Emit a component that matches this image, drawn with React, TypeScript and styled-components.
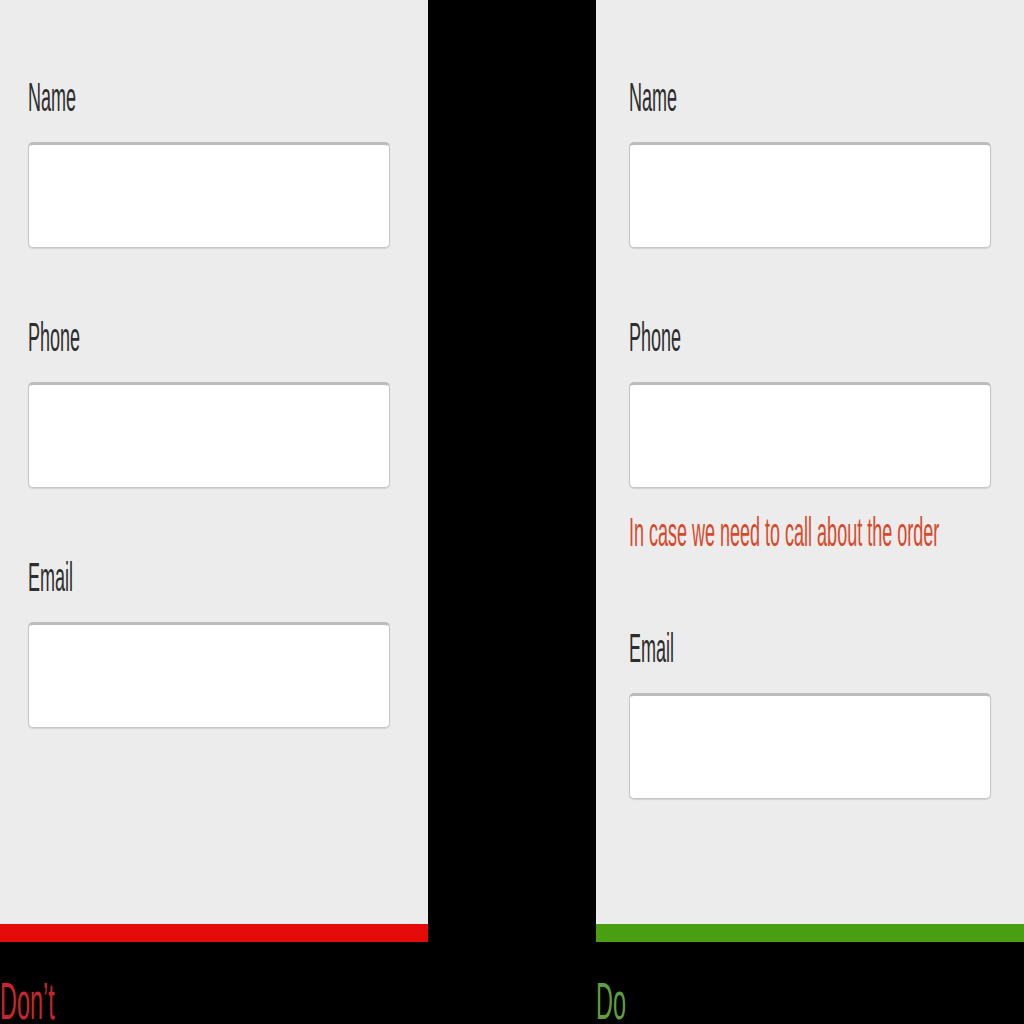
import React from "react";
import styled, { createGlobalStyle } from "styled-components";

const Global = createGlobalStyle`
  html, body { margin: 0; padding: 0; background: #000; }
  body { width: 1024px; height: 1024px; overflow: hidden; font-family: "Liberation Sans", Arial, sans-serif; }
  #root { width: 1024px; height: 1024px; }
`;

const Page = styled.div`
  display: grid;
  grid-template-columns: 428px 428px;
  column-gap: 168px;
  width: 1024px;
  height: 1024px;
  background: #000;
  overflow: hidden;
`;

const Column = styled.div`
  display: flex;
  flex-direction: column;
`;

const Panel = styled.div<{ $inset: number }>`
  height: 924px;
  box-sizing: border-box;
  background: #ececec;
  padding: 77px 0 0 ${(p) => p.$inset}px;
  display: flex;
  flex-direction: column;
  gap: 69px;
`;

const Field = styled.div`
  display: flex;
  flex-direction: column;
`;

const Squish = styled.span`
  display: inline-block;
  white-space: nowrap;
  transform: scaleX(0.45);
  transform-origin: left center;
`;

const Label = styled.div`
  font-size: 40px;
  line-height: 40px;
  height: 40px;
  color: #2e2e2e;
  margin-bottom: 25px;
`;

const Input = styled.div`
  width: 362px;
  height: 106px;
  box-sizing: border-box;
  background: #fff;
  border: 1px solid #c6c6c6;
  border-top: 3px solid #bcbcbc;
  border-radius: 5px;
  box-shadow: 0 1px 1px rgba(0, 0, 0, 0.12);
`;

const Helper = styled.div`
  font-size: 40px;
  line-height: 40px;
  height: 40px;
  color: #d8492b;
  margin-top: 24px;
  padding-bottom: 7px;
`;

const Bar = styled.div<{ $color: string }>`
  height: 18px;
  background: ${(p) => p.$color};
`;

const Caption = styled.div<{ $color: string }>`
  margin-top: 37px;
  font-size: 52px;
  line-height: 44px;
  height: 44px;
  color: ${(p) => p.$color};
`;

type FieldDef = { label: string; hint?: string };

const FormField: React.FC<FieldDef> = ({ label, hint }) => (
  <Field>
    <Label>
      <Squish>{label}</Squish>
    </Label>
    <Input />
    {hint && (
      <Helper>
        <Squish>{hint}</Squish>
      </Helper>
    )}
  </Field>
);

const dont: FieldDef[] = [{ label: "Name" }, { label: "Phone" }, { label: "Email" }];
const doFields: FieldDef[] = [
  { label: "Name" },
  { label: "Phone", hint: "In case we need to call about the order" },
  { label: "Email" },
];

export default function App() {
  return (
    <>
      <Global />
      <Page>
        <Column>
          <Panel $inset={28}>
            {dont.map((f) => (
              <FormField key={f.label} {...f} />
            ))}
          </Panel>
          <Bar $color="#e60b0b" />
          <Caption $color="#c9262c">
            <Squish>Don’t</Squish>
          </Caption>
        </Column>
        <Column>
          <Panel $inset={33}>
            {doFields.map((f) => (
              <FormField key={f.label} {...f} />
            ))}
          </Panel>
          <Bar $color="#4a9e12" />
          <Caption $color="#5f9e3e">
            <Squish>Do</Squish>
          </Caption>
        </Column>
      </Page>
    </>
  );
}
